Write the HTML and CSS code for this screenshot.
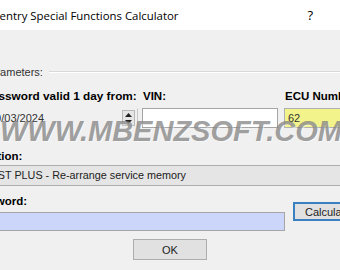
FILE: index.html
```html
<!DOCTYPE html>
<html lang="en">

<head>
    <meta charset="UTF-8" />
    <meta name="viewport" content="width=device-width, initial-scale=1.0" />
    <title>Xentry Special Functions Calculator</title>
    <link rel="stylesheet" href="styles.css">
</head>

<body>
    <div class="titlebar">
        <span class="title">Xentry Special Functions Calculator</span>
        <span class="help">?</span>
    </div>

    <div class="content">
        <div class="legend"><span>Parameters:</span></div>

        <div class="params">
            <div class="field">
                <label class="date-label">Password valid 1 day from:</label>
                <div class="spin">
                    <span class="spin-value">20/03/2024</span>
                    <span class="spin-btns">
                        <svg width="7" height="4" viewBox="0 0 7 4"><path d="M0 4 L3.5 0 L7 4 Z" fill="#222" /></svg>
                        <svg width="7" height="4" viewBox="0 0 7 4"><path d="M0 0 L3.5 4 L7 0 Z" fill="#222" /></svg>
                    </span>
                </div>
            </div>
            <div class="field">
                <label>VIN:</label>
                <div class="input"></div>
            </div>
            <div class="field">
                <label>ECU Number:</label>
                <div class="input ecu">62</div>
            </div>
        </div>

        <label class="fn-label">Function:</label>
        <div class="combo">ASSYST PLUS - Re-arrange service memory</div>

        <div class="pw-grid">
            <label class="pw-label">Password:</label>
            <div class="input pw"></div>
            <button type="button" class="btn calc">Calculate</button>
        </div>

        <div class="ok-row">
            <button type="button" class="btn ok">OK</button>
        </div>

        <div class="watermark">WWW.MBENZSOFT.COM</div>
    </div>
</body>

</html>
```

FILE: styles.css
```css
body {
    margin: 0;
    width: 340px;
    height: 270px;
    overflow: hidden;
    background-color: #f0f0f0;
    font-family: "Liberation Sans", Arial, sans-serif;
    font-size: 11px;
    color: #000;
}

.titlebar {
    height: 30px;
    background-color: #fff;
    display: flex;
    align-items: center;
    justify-content: space-between;
    padding-right: 27px;
    font-family: "Open Sans", "Noto Sans", sans-serif;
    font-size: 11.4px;
}

.title {
    margin-left: -7px;
}

.help {
    font-size: 13px;
}

.content {
    position: relative;
}

.legend {
    display: flex;
    align-items: center;
    margin-top: 35px;
    margin-left: -17px;
    line-height: 14px;
    color: #333;
}

.legend::after {
    content: "";
    flex: 1;
    margin-left: 6px;
    border-top: 1px solid #d8d8d8;
    border-bottom: 1px solid #fff;
}

.params {
    display: grid;
    grid-template-columns: 153px 136px 100px;
    column-gap: 4px;
    margin-top: 10px;
    margin-left: -15px;
}

.params .field:last-child {
    margin-left: 2px;
}

label {
    display: block;
    font-weight: bold;
    font-size: 11.5px;
    line-height: 14px;
    white-space: nowrap;
}

.field label {
    padding-left: 1px;
    margin-bottom: 5px;
}

.field .date-label {
    font-size: 11.8px;
    margin-left: -1px;
    padding-left: 0;
}

.input {
    box-sizing: border-box;
    height: 20px;
    background-color: #fff;
    border: 1px solid #a5a5a5;
    padding: 0 3px;
    line-height: 18px;
}

.ecu {
    background-color: #f3f38c;
    border-color: #b0b0b0;
    color: #333;
}

.spin {
    box-sizing: border-box;
    height: 20px;
    background-color: #f0f0f0;
    border: 1px solid #f0f0f0;
    border-right-color: #c8c8c8;
    display: flex;
    align-items: center;
    justify-content: space-between;
    padding: 0 2px 0 3px;
    color: #333;
}

.spin-btns {
    box-sizing: border-box;
    width: 13px;
    height: 16px;
    border: 1px solid #b8b8b8;
    background-color: #e6e6e6;
    display: flex;
    flex-direction: column;
    align-items: center;
    justify-content: space-around;
}

.spin-btns svg {
    display: block;
}

.fn-label {
    margin-top: 21px;
    margin-left: -30px;
}

.combo {
    box-sizing: border-box;
    height: 21px;
    margin-top: 2px;
    margin-left: -35px;
    width: 395px;
    padding-left: 3px;
    line-height: 19px;
    font-size: 10.8px;
    background-color: #e5e5e5;
    border: 1px solid #adadad;
    color: #222;
}

.pw-grid {
    display: grid;
    grid-template-columns: 315px 75px;
    column-gap: 8px;
    margin-top: 8px;
    margin-left: -30px;
}

.pw-label {
    grid-column: 1;
    grid-row: 1;
    margin-left: -1px;
}

.pw {
    grid-column: 1;
    grid-row: 2;
    height: 19px;
    margin-top: 4px;
    background-color: #ccd6fb;
}

.btn {
    box-sizing: border-box;
    font-family: "Liberation Sans", Arial, sans-serif;
    font-size: 11px;
    height: 20px;
    background-color: #e1e1e1;
    border: 1px solid #adadad;
    color: #222;
    padding: 0;
}

.calc {
    grid-column: 2;
    grid-row: 1 / span 2;
    align-self: start;
    margin-top: 8px;
    height: 19px;
    border: 2px solid #3a7fbf;
    text-align: left;
    padding-left: 10px;
}

.ok-row {
    display: flex;
    justify-content: center;
    margin-top: 8px;
}

.ok {
    width: 74px;
    height: 21px;
}

.watermark {
    position: absolute;
    left: 0;
    top: 50px;
    font-family: "Liberation Sans", Arial, sans-serif;
    font-size: 29px;
    font-weight: bold;
    font-style: italic;
    color: rgba(120, 120, 120, 0.7);
    text-shadow: 1px 1px 0 rgba(255, 255, 255, 0.5);
    white-space: nowrap;
    pointer-events: none;
}
```
